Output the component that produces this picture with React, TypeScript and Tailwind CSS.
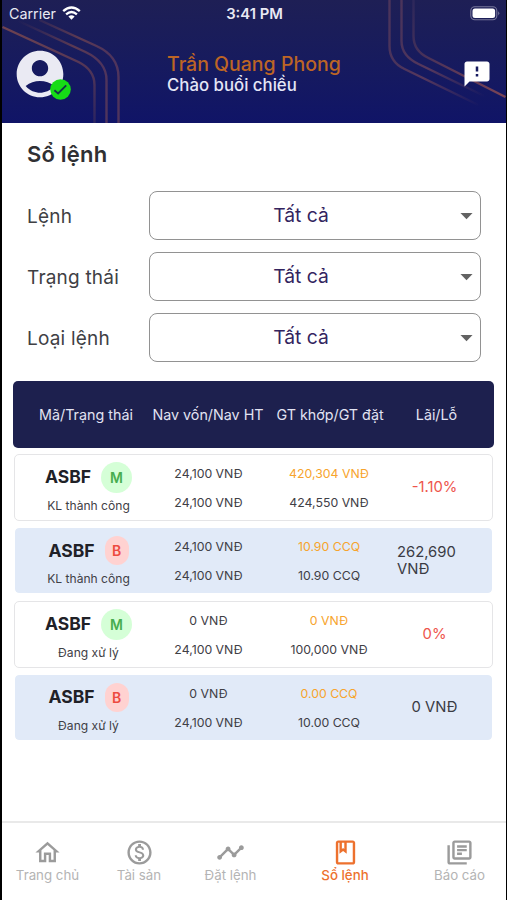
import {
  MdAccountCircle,
  MdArrowDropDown,
  MdFeedback,
  MdOutlineBook,
  MdOutlineHome,
  MdOutlineLibraryBooks,
  MdOutlineMonetizationOn,
  MdTimeline,
} from "react-icons/md";
import type { IconType } from "react-icons";

type Order = {
  code: string;
  side: "M" | "B";
  status: string;
  nav: string;
  navNow: string;
  matched: string;
  placed: string;
  profit: string;
};

const filters = ["Lệnh", "Trạng thái", "Loại lệnh"];

const orders: Order[] = [
  {
    code: "ASBF",
    side: "M",
    status: "KL thành công",
    nav: "24,100 VNĐ",
    navNow: "24,100 VNĐ",
    matched: "420,304 VNĐ",
    placed: "424,550 VNĐ",
    profit: "-1.10%",
  },
  {
    code: "ASBF",
    side: "B",
    status: "KL thành công",
    nav: "24,100 VNĐ",
    navNow: "24,100 VNĐ",
    matched: "10.90 CCQ",
    placed: "10.90 CCQ",
    profit: "262,690 VNĐ",
  },
  {
    code: "ASBF",
    side: "M",
    status: "Đang xử lý",
    nav: "0 VNĐ",
    navNow: "24,100 VNĐ",
    matched: "0 VNĐ",
    placed: "100,000 VNĐ",
    profit: "0%",
  },
  {
    code: "ASBF",
    side: "B",
    status: "Đang xử lý",
    nav: "0 VNĐ",
    navNow: "24,100 VNĐ",
    matched: "0.00 CCQ",
    placed: "10.00 CCQ",
    profit: "0 VNĐ",
  },
];

const tabs: { label: string; icon: IconType; active?: boolean }[] = [
  { label: "Trang chủ", icon: MdOutlineHome },
  { label: "Tài sản", icon: MdOutlineMonetizationOn },
  { label: "Đặt lệnh", icon: MdTimeline },
  { label: "Sổ lệnh", icon: MdOutlineBook, active: true },
  { label: "Báo cáo", icon: MdOutlineLibraryBooks },
];

function HeaderLines() {
  return (
    <svg
      className="absolute inset-0 h-full w-full"
      viewBox="0 0 503 123"
      fill="none"
      strokeWidth="2.4"
    >
      <defs>
        <linearGradient id="fadeLeft" gradientUnits="userSpaceOnUse" x1="15" y1="20" x2="95" y2="70">
          <stop offset="0" stopColor="#5c3a52" stopOpacity="0" />
          <stop offset="0.65" stopColor="#5c3a52" />
          <stop offset="1" stopColor="#56375b" stopOpacity="0.9" />
        </linearGradient>
        <linearGradient id="fadeRight" gradientUnits="userSpaceOnUse" x1="400" y1="50" x2="490" y2="104">
          <stop offset="0" stopColor="#50365b" stopOpacity="0.9" />
          <stop offset="0.3" stopColor="#57385c" />
          <stop offset="0.9" stopColor="#57385c" stopOpacity="0" />
        </linearGradient>
        <linearGradient id="lineDown" gradientUnits="userSpaceOnUse" x1="0" y1="26" x2="0" y2="123">
          <stop offset="0" stopColor="#70434f" />
          <stop offset="1" stopColor="#2c2460" />
        </linearGradient>
        <linearGradient id="lineRight" gradientUnits="userSpaceOnUse" x1="410" y1="0" x2="503" y2="97">
          <stop offset="0" stopColor="#2c275b" />
          <stop offset="1" stopColor="#7b4455" />
        </linearGradient>
      </defs>
      <path d="M0 27L76 62Q92 70 92 85V123" stroke="url(#lineDown)" />
      <path d="M16 21L83 52Q104 62 104 80V123" stroke="url(#fadeLeft)" />
      <path d="M37 20L94 46Q116 56 116 77V123" stroke="url(#fadeLeft)" />
      <path d="M387 0V46Q387 62 402 69L480 107" stroke="url(#fadeRight)" />
      <path d="M399 0V41Q399 56 416 64L492 101" stroke="url(#fadeRight)" />
      <path d="M411 0V36Q411 51 426 58L503 97" stroke="url(#lineRight)" />
    </svg>
  );
}

function StatusBar() {
  return (
    <div className="relative grid h-7 grid-cols-3 items-center pr-[6px] pl-[7px] text-[#e9e9f3]">
      <div className="flex items-center gap-[6px]">
        <span className="text-[14.3px]">Carrier</span>
        <svg className="-mt-[2px] h-[14px] w-[19px]" viewBox="0 0 19 14" fill="none" stroke="#fff">
          <path d="M1.2 5.2Q9.5-2.2 17.8 5.2" strokeWidth="2.4" />
          <path d="M4.1 8.4Q9.5 3.6 14.9 8.4" strokeWidth="2.3" />
          <path d="M9.5 13.8L6.4 10.6Q9.5 8 12.6 10.6Z" fill="#fff" stroke="none" />
        </svg>
      </div>
      <span className="text-center text-[14.8px] font-semibold">3:41 PM</span>
      <svg className="-mt-[2px] h-[15px] w-[30px] justify-self-end" viewBox="0 0 30 15">
        <rect x="0.8" y="0.8" width="26" height="13" rx="4" fill="none" stroke="#77779b" strokeWidth="1.1" />
        <rect x="2.5" y="2.5" width="22.6" height="9.6" rx="2.5" fill="#fff" />
        <path d="M28.2 5.2Q30.4 7.3 28.2 9.4Z" fill="#77779b" />
      </svg>
    </div>
  );
}

function Header() {
  return (
    <header className="relative h-[123px] shrink-0 bg-linear-to-b from-[#1e1f55] to-[#101467]">
      <HeaderLines />
      <StatusBar />
      <div className="relative flex items-start pl-[10px]">
        <div className="relative mt-[18px] h-14 w-14">
          <MdAccountCircle className="h-14 w-14 text-[#eaeaf3]" />
          <svg className="absolute top-[33px] left-[38px] h-[21px] w-[21px]" viewBox="0 0 21 21">
            <circle cx="10.5" cy="10.5" r="10.3" fill="#16dc16" />
            <path d="M4.4 11.3L8.1 14.4L16.2 6.4" fill="none" stroke="#13354a" strokeWidth="1.9" />
          </svg>
        </div>
        <div className="mt-[24px] ml-[99px] flex-1">
          <p className="text-[19.5px] leading-[24px] font-medium text-[#bd6525]">
            Trần Quang Phong
          </p>
          <p className="-mt-px text-[16.8px] leading-[20px] font-medium text-[#e4e6f6]">
            Chào buổi chiều
          </p>
        </div>
        <MdFeedback className="mt-[31px] mr-[14px] h-[30px] w-[30px] text-white" />
      </div>
    </header>
  );
}

function FilterRow({ label }: { label: string }) {
  return (
    <div className="flex h-[49px] items-center">
      <span className="w-[122px] pt-[3px] text-[19px] tracking-[0.2px] text-[#404044]">
        {label}
      </span>
      <button className="flex h-full flex-1 items-center rounded-[8px] border-[1.5px] border-[#929292]">
        <span className="flex-1 text-center text-[19.3px] text-[#33245e]">Tất cả</span>
        <MdArrowDropDown className="-mr-px h-[29px] w-[29px] text-[#626262]" />
      </button>
    </div>
  );
}

function OrderRow({ order }: { order: Order }) {
  const isBuy = order.side === "M";
  // long amounts wrap, with the currency on its own line
  const wraps = order.profit.length > 8;

  return (
    <div
      className={`grid h-[67px] grid-cols-[147px_93px_148px_1fr] rounded-[5px] border-[1.5px] text-center text-[12.3px] text-[#3f4046] ${
        isBuy ? "border-[#e5e5e7] bg-white" : "border-white bg-[#e1eaf8] bg-clip-padding"
      }`}
    >
      <div className="flex flex-col items-center">
        <div className="mt-[7px] flex h-[31px] items-center gap-[10px]">
          <span className="text-[17.5px] font-bold text-[#202127]">{order.code}</span>
          <span
            className={`flex items-center justify-center text-[14px] font-semibold ${
              isBuy
                ? "h-[31px] w-[31px] rounded-full bg-[#d5ffd7] text-[#48ad4f]"
                : "h-[29px] w-[24px] rounded-[12px] bg-[#ffd2d1] text-[#ed4a40]"
            }`}
          >
            {order.side}
          </span>
        </div>
        <span className="mt-[5px] text-[12.1px] leading-[16px]">{order.status}</span>
      </div>
      <div className="flex flex-col gap-[13px] pt-[11px] leading-[16px]">
        <span>{order.nav}</span>
        <span>{order.navNow}</span>
      </div>
      <div className="flex flex-col gap-[13px] pt-[11px] leading-[16px]">
        <span className="text-[#f7a42d]">{order.matched}</span>
        <span>{order.placed}</span>
      </div>
      <div
        className={`-ml-[6px] flex items-center text-[14.8px] leading-[17px] ${
          isBuy ? "text-[#ee554c]" : "text-[#3a3b44]"
        }`}
      >
        <span className={`w-[75px] ${wraps ? "text-left" : "text-center"}`}>{order.profit}</span>
      </div>
    </div>
  );
}

function TabBar() {
  return (
    <nav className="grid h-[79px] shrink-0 grid-cols-[91px_92px_91px_138px_91px] border-t-2 border-[#e9e9e9] pt-[15px]">
      {tabs.map(({ label, icon: Icon, active }) => (
        <a
          key={label}
          href="#"
          className={`flex flex-col items-center text-[13.3px] leading-[16px] whitespace-nowrap ${
            active ? "font-medium text-[#ed712e]" : "text-[#b4b4b4]"
          }`}
        >
          <Icon className={`h-[29px] w-[29px] ${active ? "" : "text-[#9b9b9b]"}`} />
          <span>{label}</span>
        </a>
      ))}
    </nav>
  );
}

export default function App() {
  return (
    <div className="flex h-[900px] w-[507px] flex-col overflow-hidden border-r-[1.5px] border-l-2 border-black bg-white font-['Inter','Noto_Sans',sans-serif]">
      <Header />
      <main className="flex-1">
        <h1 className="mt-[17px] ml-[25px] text-[22px] leading-[28px] font-semibold tracking-[0.2px] text-[#303033]">
          Sổ lệnh
        </h1>
        <div className="mt-[23px] flex flex-col gap-[12px] pr-[25px] pl-[25px]">
          {filters.map((label) => (
            <FilterRow key={label} label={label} />
          ))}
        </div>

        <section className="mt-[19px] pr-[12px] pl-[11px]">
          <div className="grid h-[67px] grid-cols-[146px_98px_146px_1fr] items-center rounded-[5px] bg-[#1d204e] text-center text-[14.3px] whitespace-nowrap text-[#e2e3f2]">
            <span>Mã/Trạng thái</span>
            <span className="-mx-3">Nav vốn/Nav HT</span>
            <span>GT khớp/GT đặt</span>
            <span className="w-[67px]">Lãi/Lỗ</span>
          </div>
          <div className="mx-px mt-[6px] flex flex-col gap-[6.3px]">
            {orders.map((order, i) => (
              <OrderRow key={i} order={order} />
            ))}
          </div>
        </section>
      </main>
      <TabBar />
    </div>
  );
}
